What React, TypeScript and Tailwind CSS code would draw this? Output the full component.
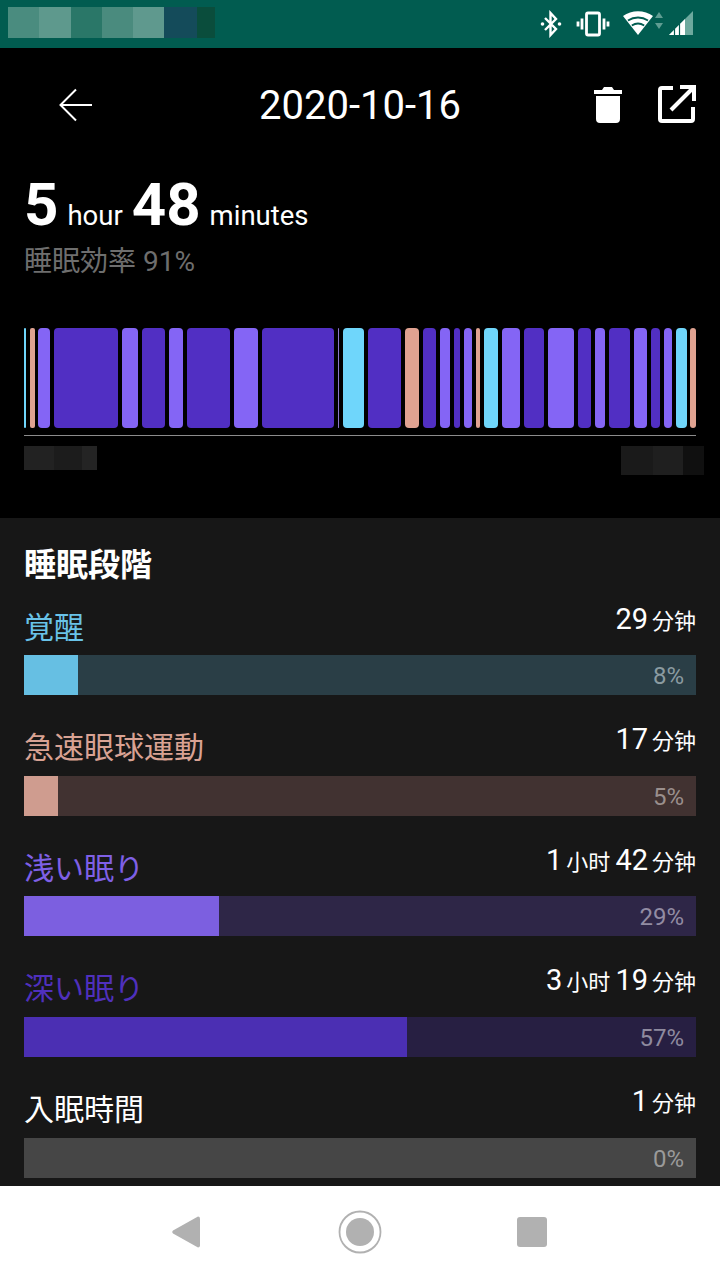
const C = "bg-[#6fd6fb]", S = "bg-[#e0a291]", L = "bg-[#8465f5]", D = "bg-[#512fc3]", T = "bg-[#8a75c8]";

const segments: [number, number, string, string][] = [
  [24, 26, C, "rounded-[1px]"], [30, 34.5, S, "rounded-[2px]"], [38, 49.5, L, "rounded-[4px]"], [53.5, 118, D, "rounded-[4px]"],
  [122, 137.5, L, "rounded-[4px]"], [141.5, 165, D, "rounded-[4px]"], [169, 183, L, "rounded-[4px]"], [187, 230, D, "rounded-[4px]"],
  [233.5, 258, L, "rounded-[4px]"], [262, 334, D, "rounded-[4px]"], [337.5, 339, T, "rounded-[1px]"], [343, 364, C, "rounded-[4px]"],
  [368, 401, D, "rounded-[4px]"], [405, 419, S, "rounded-[4px]"], [423, 436, D, "rounded-[4px]"], [440, 450, L, "rounded-[4px]"],
  [454, 460, D, "rounded-[3px]"], [463.5, 472, L, "rounded-[4px]"], [476, 480, S, "rounded-[2px]"], [483.5, 498, C, "rounded-[4px]"],
  [501.5, 520, L, "rounded-[4px]"], [524, 544, D, "rounded-[4px]"], [548, 574, L, "rounded-[4px]"], [578, 591, D, "rounded-[4px]"],
  [595, 605, L, "rounded-[4px]"], [609, 630, D, "rounded-[4px]"], [634, 647, L, "rounded-[4px]"], [651, 659.5, D, "rounded-[4px]"],
  [663.5, 672, L, "rounded-[4px]"], [676, 686.5, C, "rounded-[4px]"], [690, 696, S, "rounded-[3px]"],
];

const blur: [number, string][] = [
  [31, "bg-[#4a8c7f]"], [32, "bg-[#5e998d]"], [31, "bg-[#2a7768]"], [31, "bg-[#4a8b7e]"], [31, "bg-[#5f998e]"], [33, "bg-[#144b5a]"], [18, "bg-[#0a4d3c]"],
];

type Part = [string, string];
const stages: { label: string; labelCls: string; parts: Part[]; fill: number; fillCls: string; track: string; pct: string; pctCls: string }[] = [
  { label: "覚醒", labelCls: "text-[#69c3e8]", parts: [["29", "分钟"]], fill: 54, fillCls: "bg-[#66bfe3]", track: "bg-[#2a3e46]", pct: "8%", pctCls: "text-[#8b9ba1]" },
  { label: "急速眼球運動", labelCls: "text-[#d9a293]", parts: [["17", "分钟"]], fill: 34, fillCls: "bg-[#cf9c8f]", track: "bg-[#413231]", pct: "5%", pctCls: "text-[#9a8f8d]" },
  { label: "浅い眠り", labelCls: "text-[#7f60e6]", parts: [["1", "小时"], ["42", "分钟"]], fill: 195, fillCls: "bg-[#7c5fe0]", track: "bg-[#2e2647]", pct: "29%", pctCls: "text-[#928ca3]" },
  { label: "深い眠り", labelCls: "text-[#4f30bd]", parts: [["3", "小时"], ["19", "分钟"]], fill: 383, fillCls: "bg-[#4b2fb3]", track: "bg-[#271f42]", pct: "57%", pctCls: "text-[#8e8a9f]" },
  { label: "入眠時間", labelCls: "text-white", parts: [["1", "分钟"]], fill: 0, fillCls: "", track: "bg-[#464646]", pct: "0%", pctCls: "text-[#9a9a9a]" },
];

export default function App() {
  return (
    <div className="w-[720px] h-[1280px] flex flex-col overflow-hidden bg-black font-['Roboto','Noto_Sans_CJK_JP',sans-serif]">
      <div className="h-[48px] shrink-0 bg-[#015c50] flex items-center pl-[8px] pr-[27px]">
        <div className="flex h-[31px] -mt-[3px]">
          {blur.map(([w, c], i) => <div key={i} className={c} style={{ width: w }} />)}
        </div>
        <div className="ml-auto flex items-center">
          <svg width="24" height="28" viewBox="0 0 24 28" className="text-white" fill="none" stroke="currentColor" strokeWidth="2.4">
            <path d="M6 8l11 11-5.500 6V3L17 9 6 20" />
            <circle cx="3.500" cy="14" r="1.800" fill="currentColor" stroke="none" />
            <circle cx="20.500" cy="14" r="1.800" fill="currentColor" stroke="none" />
          </svg>
          <svg width="34" height="28" viewBox="0 0 34 28" className="ml-[13px]" fill="none">
            <rect x="10.500" y="3" width="13" height="22" rx="1.500" stroke="#fff" strokeWidth="2.800" />
            <path d="M6 8.500v11M2 11.500v5M28 8.500v11M32 11.500v5" stroke="#fff" strokeWidth="2.800" />
          </svg>
          <svg width="48" height="30" viewBox="0 0 48 30" className="ml-[13px]" fill="none">
            <path d="M0 7C8.500 .5 21.500 .5 30 7L15 26Z" fill="#fff" />
            <path d="M5 11.500c6-4 14-4 20 0M8.800 16.500c4-2.600 8.400-2.600 12.400 0" stroke="#015c50" strokeWidth="1.800" />
            <path d="M32 9l4-6 4 6ZM32 14l4 6 4-6Z" fill="#5f9d92" />
          </svg>
          <svg width="24" height="28" viewBox="0 0 24 28" className="-ml-[2px]">
            <path d="M24 1v24H0Z" fill="#6da99e" />
            <path d="M16 9v16H0Z" fill="#fff" />
            <path d="M5.500 19v6M10.500 14v11" stroke="#015c50" strokeWidth="1.200" />
          </svg>
        </div>
      </div>

      <div className="h-[470px] shrink-0 bg-black flex flex-col">
        <div className="relative h-[114px] shrink-0 flex items-center justify-center pt-[2px]">
          <svg width="36" height="36" viewBox="0 0 36 36" className="absolute left-[58px] top-[39px]" fill="none" stroke="#fff" strokeWidth="2">
            <path d="M34 18H3M18 2.500 2.500 18 18 33.500" />
          </svg>
          <span className="text-[40px] leading-none text-white">2020-10-16</span>
          <svg width="32" height="40" viewBox="0 0 32 40" className="absolute left-[592px] top-[36px]" fill="#fff">
            <path d="M2 6h8l2-3h8l2 3h8v4H2ZM4 12h24v23a4 4 0 0 1-4 4H8a4 4 0 0 1-4-4Z" />
          </svg>
          <svg width="38" height="38" viewBox="0 0 38 38" className="absolute left-[658px] top-[37px]" fill="none" stroke="#fff" strokeWidth="4">
            <path d="M15 3H4a2 2 0 0 0-2 2v29a2 2 0 0 0 2 2h29a2 2 0 0 0 2-2V22M22 2h14v14" />
            <path d="M35 3 13 25" />
          </svg>
        </div>
        <div className="pl-[24px] flex items-baseline text-white h-[60px] mt-[13px]">
          <span className="text-[60px] leading-[60px] font-bold">5</span>
          <span className="text-[27.5px] ml-[9px]">hour</span>
          <span className="text-[60px] leading-[60px] font-bold ml-[9px]">48</span>
          <span className="text-[27.5px] ml-[9px]">minutes</span>
        </div>
        <div className="pl-[24px] text-[28px] leading-[36px] text-[#6e6e6e] mt-[9px]">睡眠効率 91%</div>
        <div className="mx-[24px] mt-[48px] h-[100px] flex">
          {segments.map(([a, b, c, r], i) => (
            <div key={i} className={`h-full shrink-0 ${c} ${r}`} style={{ width: b - a, marginLeft: i === 0 ? 0 : a - segments[i - 1][1] }} />
          ))}
        </div>
        <div className="mx-[24px] mt-[7px] h-[1px] bg-[#8c8c8c]" />
        <div className="mx-[24px] mt-[10px] flex items-start justify-between">
          <div className="flex h-[24px] w-[73px]">
            <div className="w-[30px] bg-[#222222]" /><div className="w-[28px] bg-[#1c1c1c]" /><div className="w-[15px] bg-[#242424]" />
          </div>
          <div className="flex h-[29px] w-[83px] -mr-[8px]">
            <div className="w-[32px] bg-[#1a1a1a]" /><div className="w-[30px] bg-[#1f1f1f]" /><div className="w-[21px] bg-[#101010]" />
          </div>
        </div>
      </div>

      <div className="h-[668px] shrink-0 bg-[#171717] pt-[27px] overflow-hidden">
        <div className="pl-[24px] text-[32px] leading-[40px] font-bold text-white">睡眠段階</div>
        <div className="flex flex-col mt-[-10px]">
          {stages.map((s) => (
            <div key={s.label} className="h-[120.67px] shrink-0 flex flex-col justify-end px-[24px] pb-[0.67px]">
              <div className="flex items-center justify-between h-[50px] pb-[4px]">
                <span className={`text-[30px] leading-[40px] -mt-[1px] ${s.labelCls}`}>{s.label}</span>
                <span className="text-white flex items-baseline -mt-[16px]">
                  {s.parts.map(([n, u]) => (
                    <span key={u} className="ml-[5px]">
                      <span className="text-[29px] leading-[40px]">{n}</span>
                      <span className="text-[22px] leading-[40px] ml-[4px]">{u}</span>
                    </span>
                  ))}
                </span>
              </div>
              <div className={`h-[40px] shrink-0 relative ${s.track}`}>
                {s.fill > 0 && <div className={`absolute left-0 top-0 h-full ${s.fillCls}`} style={{ width: s.fill }} />}
                <span className={`absolute right-[12px] top-0 text-[24px] leading-[42px] ${s.pctCls}`}>{s.pct}</span>
              </div>
            </div>
          ))}
        </div>
      </div>

      <div className="h-[94px] shrink-0 bg-white flex items-center pb-[3px]">
        <svg width="30" height="34" viewBox="0 0 30 34" className="ml-[171px]">
          <path d="M27 1.500a2 2 0 0 1 2 2v27a2 2 0 0 1-2 2L2 18.500a2 2 0 0 1 0-3Z" fill="#b1b1b1" />
        </svg>
        <svg width="44" height="44" viewBox="0 0 44 44" className="ml-[137px]">
          <circle cx="22" cy="22" r="20.500" fill="none" stroke="#b1b1b1" strokeWidth="1.800" />
          <circle cx="22" cy="22" r="14" fill="#b1b1b1" />
        </svg>
        <div className="ml-[135px] w-[30px] h-[30px] rounded-[3px] bg-[#b1b1b1]" />
      </div>
    </div>
  );
}
